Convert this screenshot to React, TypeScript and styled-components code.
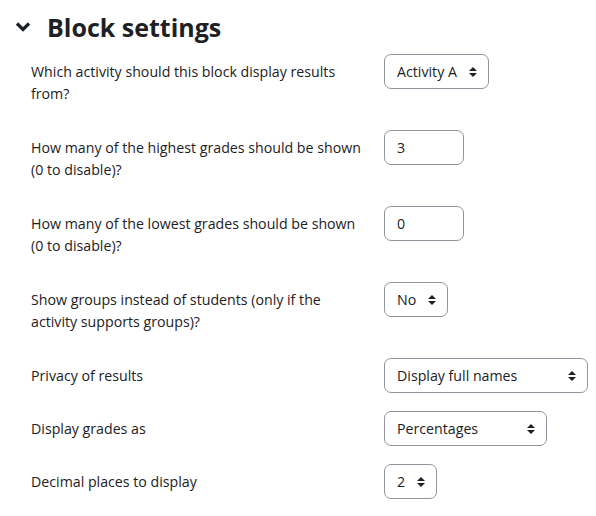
import styled, { createGlobalStyle } from "styled-components";

const GlobalStyle = createGlobalStyle`
  body {
    margin: 0;
    background: #fff;
    font-family: "Open Sans", "Noto Sans", sans-serif;
    color: #1d2125;
  }
`;

const Page = styled.div`
  width: 596px;
  padding: 10px 0 0 0;
  box-sizing: border-box;
`;

const Legend = styled.h2`
  display: flex;
  align-items: center;
  gap: 16px;
  margin: 0 0 10px 15px;
  font-size: 25px;
  font-weight: 700;
  line-height: 34px;
  color: #1d2125;
`;

const Form = styled.div`
  display: flex;
  flex-direction: column;
  padding-left: 31px;
`;

const Row = styled.div<{ $tall?: boolean }>`
  display: flex;
  align-items: flex-start;
  min-height: ${(p) => (p.$tall ? "60px" : "36px")};
  margin-bottom: ${(p) => (p.$tall ? "16px" : "17px")};
`;

const Label = styled.div`
  width: 353px;
  padding-top: 7px;
  padding-right: 20px;
  box-sizing: border-box;
  font-size: 14.2px;
  line-height: 22px;
`;

const Control = styled.div<{ $w: number }>`
  display: flex;
  align-items: center;
  justify-content: space-between;
  width: ${(p) => p.$w}px;
  height: 35px;
  padding: 0 11px 0 12px;
  box-sizing: border-box;
  border: 1px solid #8f959e;
  border-radius: 7px;
  font-size: 14.2px;
  color: #1d2125;
`;

const Arrows = () => (
  <svg width="8" height="10" viewBox="0 0 8 10">
    <path d="M0 4 L4 0 L8 4 Z M0 6 L8 6 L4 10 Z" fill="#1d2125" />
  </svg>
);

const Chevron = () => (
  <svg width="16" height="12" viewBox="0 0 16 12">
    <path d="M2 2.5 L8 8.5 L14 2.5" stroke="#1d2125" strokeWidth="3.2" fill="none" />
  </svg>
);

type Field = {
  label: string;
  value: string;
  width: number;
  select: boolean;
  tall?: boolean;
};

const fields: Field[] = [
  { label: "Which activity should this block display results from?", value: "Activity A", width: 105, select: true, tall: true },
  { label: "How many of the highest grades should be shown (0 to disable)?", value: "3", width: 80, select: false, tall: true },
  { label: "How many of the lowest grades should be shown (0 to disable)?", value: "0", width: 80, select: false, tall: true },
  { label: "Show groups instead of students (only if the activity supports groups)?", value: "No", width: 64, select: true, tall: true },
  { label: "Privacy of results", value: "Display full names", width: 204, select: true },
  { label: "Display grades as", value: "Percentages", width: 163, select: true },
  { label: "Decimal places to display", value: "2", width: 53, select: true },
];

export default function App() {
  return (
    <Page>
      <GlobalStyle />
      <Legend>
        <Chevron />
        Block settings
      </Legend>
      <Form>
        {fields.map((f) => (
          <Row key={f.label} $tall={f.tall}>
            <Label>{f.label}</Label>
            <Control $w={f.width}>
              <span>{f.value}</span>
              {f.select && <Arrows />}
            </Control>
          </Row>
        ))}
      </Form>
    </Page>
  );
}
